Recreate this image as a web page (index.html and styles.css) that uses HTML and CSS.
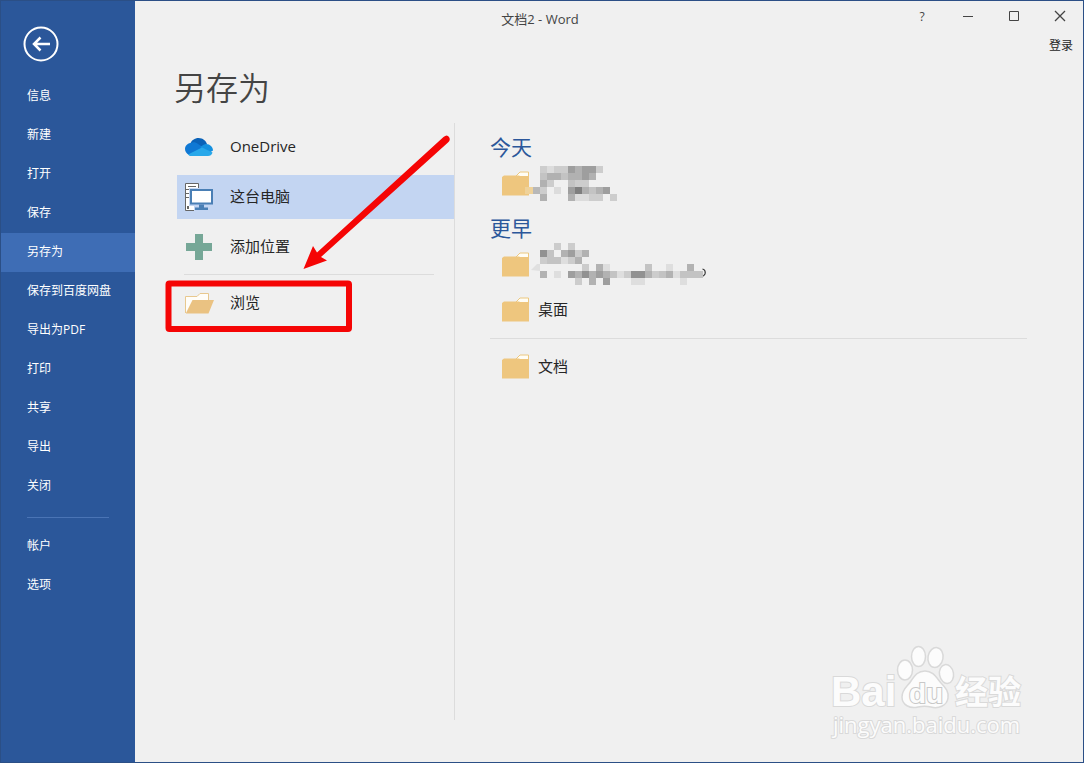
FILE: index.html
```html
<!DOCTYPE html>
<html lang="zh-CN">
<head>
    <meta charset="UTF-8">
    <meta name="viewport" content="width=device-width, initial-scale=1.0">
    <title>文档2 - Word</title>
    <link rel="stylesheet" href="styles.css">
</head>
<body>
    <svg class="defs" aria-hidden="true">
        <symbol id="folder" viewBox="0 0 28 25">
            <path d="M14 5 L18 1 H26.500 V6 H14Z" fill="#fffdf5" stroke="#ecc880" stroke-width="1"/>
            <path d="M0 6 L2 4.500 H15 L17 4.500 L18 5 H27 V24.500 H0Z" fill="#eec67e"/>
        </symbol>
    </svg>

    <div class="window">
        <aside class="sidebar">
            <button class="back" type="button" aria-label="返回">
                <svg width="36" height="36" viewBox="0 0 36 36">
                    <circle cx="18" cy="18" r="16.500" fill="none" stroke="#fff" stroke-width="2"/>
                    <path d="M27 18H11M17.500 11.500L11 18l6.500 6.500" fill="none" stroke="#fff" stroke-width="2.500"/>
                </svg>
            </button>
            <nav class="menu">
                <a href="#">信息</a>
                <a href="#">新建</a>
                <a href="#">打开</a>
                <a href="#">保存</a>
                <a href="#" class="active">另存为</a>
                <a href="#">保存到百度网盘</a>
                <a href="#">导出为PDF</a>
                <a href="#">打印</a>
                <a href="#">共享</a>
                <a href="#">导出</a>
                <a href="#">关闭</a>
                <hr>
                <a href="#">帐户</a>
                <a href="#">选项</a>
            </nav>
        </aside>

        <main class="main">
            <header class="titlebar">
                <span class="doc-title">文档2 - Word</span>
                <div class="controls">
                    <button type="button" aria-label="帮助">?</button>
                    <button type="button" aria-label="最小化">
                        <svg width="12" height="12" viewBox="0 0 12 12"><path d="M1 6.500h10" stroke="#444" fill="none"/></svg>
                    </button>
                    <button type="button" aria-label="最大化">
                        <svg width="12" height="12" viewBox="0 0 12 12"><path d="M1.500 1.500h9v9h-9z" stroke="#444" fill="none"/></svg>
                    </button>
                    <button type="button" aria-label="关闭">
                        <svg width="12" height="12" viewBox="0 0 12 12"><path d="M1 1l10 10M11 1L1 11" stroke="#444" stroke-width="1.300" fill="none"/></svg>
                    </button>
                </div>
            </header>
            <div class="account"><a href="#">登录</a></div>

            <h1>另存为</h1>

            <div class="panels">
                <section class="places">
                    <button type="button" class="place">
                        <svg width="30" height="30" viewBox="0 0 30 30">
                            <path d="M6 13 C7 8 11 6 14.500 6 C19 6 22 9 23 12 L15 17Z" fill="#0a62b8"/>
                            <path d="M5 23 C-1 20 0 12 6.500 11 C9 9.500 12 10 14 12 L22 17 L12 24 H7Z" fill="#0f78d4"/>
                            <path d="M16 15 L20 12.500 C24 10.500 29 14 29 18.500 L25 21Z" fill="#1490df"/>
                            <path d="M4 22.500 L18 15.500 L28.500 20.500 C28 23 26 24 24 24 H7 C6 24 5 23.500 4 22.500Z" fill="#28a8ea"/>
                        </svg>
                        <span>OneDrive</span>
                    </button>
                    <button type="button" class="place selected">
                        <svg width="30" height="30" viewBox="0 0 30 30">
                            <path d="M1.500 1.500H14.500V28.500H1.500Z" fill="#fff" stroke="#666"/>
                            <path d="M4 4.500h8M2 7.500h12M2 11.500h5M2 15.500h5" stroke="#666" fill="none"/>
                            <path d="M3 24h2v3H3z" fill="#666"/>
                            <path d="M5 6H30V24H22V30H10V24H5Z" fill="#c3d5f2"/>
                            <path d="M7 8H28V21.500H7Z" fill="#fff" stroke="#4a7fb5" stroke-width="2"/>
                            <path d="M15 22.500h5v3h4v2.500H11v-2.500h4z" fill="#4a7fb5"/>
                        </svg>
                        <span>这台电脑</span>
                    </button>
                    <button type="button" class="place">
                        <svg width="30" height="30" viewBox="0 0 30 30">
                            <path d="M11 2h8v9h9v8h-9v9h-8v-9H2v-8h9z" fill="#76a797"/>
                        </svg>
                        <span>添加位置</span>
                    </button>
                    <hr>
                    <button type="button" class="place">
                        <svg width="30" height="30" viewBox="0 0 30 30">
                            <path d="M1.500 25V8.500H13L16 5.500H24.500V13" fill="#fffdf8" stroke="#e8c88e"/>
                            <path d="M2 25L8.500 12H30L24.500 25.500H2Z" fill="#eac282"/>
                        </svg>
                        <span>浏览</span>
                    </button>

                    <svg class="callout" width="300" height="220" viewBox="0 0 300 220" aria-hidden="true">
                        <rect x="8.500" y="163.500" width="180.500" height="45.500" rx="1" fill="none" stroke="#f50505" stroke-width="6"/>
                        <path d="M283.500 17Q287 14 289 17Q291 20 288 22.500L161 137L167 140.500L143.500 149L153 126L157 132.500Z" fill="#f50505"/>
                    </svg>
                </section>

                <section class="recent">
                    <h2>今天</h2>
                    <a href="#" class="folder">
                        <svg class="folder-icon"><use href="#folder"/></svg>
                        <svg class="mosaic" width="182" height="42" viewBox="533 243 182 42" aria-label="文件夹">
                            <g transform="translate(0 80)" shape-rendering="crispEdges">
                                <path d="M525 187H533V194H525Z" fill="#efd29a"/>
                                <path d="M533 187h7v7h-7z" fill="#b8b8b8"/>
                                <path d="M547 166h7v7h-7zM554 187h7v7h-7zM575 194h14v7h-14z" fill="#dcdcdc"/>
                                <path d="M540 166h7v7h-7zM554 166h14v7h-14zM596 166h7v7h-7zM547 180h7v7h-7zM575 180h14v7h-14zM540 187h7v7h-7zM589 194h14v7h-14zM610 194h7v7h-7z" fill="#cdcdcd"/>
                                <path d="M540 173h7v7h-7zM561 173h7v7h-7zM568 180h7v7h-7zM589 187h7v7h-7z" fill="#c3c3c3"/>
                                <path d="M575 166h7v7h-7zM547 173h14v7h-14zM568 173h14v7h-14zM589 173h7v7h-7zM540 180h7v7h-7zM582 187h7v7h-7zM596 187h7v7h-7zM540 194h7v7h-7zM568 194h7v7h-7z" fill="#b1b1b1"/>
                                <path d="M568 166h7v7h-7zM582 166h14v7h-14zM582 173h7v7h-7zM568 187h7v7h-7zM603 187h7v7h-7z" fill="#9e9e9e"/>
                                <path d="M575 187h7v7h-7z" fill="#7f7f7f"/>
                            </g>
                        </svg>
                    </a>
                    <h2>更早</h2>
                    <a href="#" class="folder">
                        <svg class="folder-icon"><use href="#folder"/></svg>
                        <svg class="mosaic" width="182" height="42" viewBox="533 244 182 42" aria-label="文件夹">
                            <path d="M702.500 269Q706 270 705 274Q704 276 702 276.500" fill="none" stroke="#333" stroke-width="1.200"/>
                            <path d="M531 270L537 264H540V271Z" fill="#e0e0e0"/>
                            <g shape-rendering="crispEdges">
                                <path d="M561 257h7v7h-7zM603 264h7v7h-7zM666 264h7v7h-7zM554 271h7v7h-7zM617 271h7v7h-7zM673 271h7v7h-7zM631 278h14v7h-14zM680 278h7v7h-7z" fill="#dedede"/>
                                <path d="M554 243h7v7h-7zM568 243h7v7h-7zM575 250h7v7h-7zM540 257h7v7h-7zM568 257h7v7h-7zM582 264h7v7h-7zM624 271h7v7h-7zM652 271h7v7h-7zM575 278h7v7h-7z" fill="#cccccc"/>
                                <path d="M547 250h7v7h-7zM547 257h14v7h-14zM645 264h7v7h-7zM610 271h7v7h-7zM659 271h7v7h-7zM680 271h23v7h-23z" fill="#c3c3c3"/>
                                <path d="M561 250h7v7h-7zM582 250h7v7h-7zM575 257h7v7h-7zM596 264h7v7h-7zM687 264h7v7h-7zM540 271h7v7h-7zM575 271h7v7h-7zM589 271h7v7h-7zM603 271h7v7h-7zM645 271h7v7h-7zM666 271h7v7h-7zM589 278h7v7h-7z" fill="#b2b2b2"/>
                                <path d="M568 250h7v7h-7zM568 271h7v7h-7zM596 271h7v7h-7zM603 278h7v7h-7z" fill="#9e9e9e"/>
                                <path d="M540 250h7v7h-7zM582 271h7v7h-7zM631 271h14v7h-14z" fill="#919191"/>
                            </g>
                        </svg>
                    </a>
                    <a href="#" class="folder">
                        <svg class="folder-icon"><use href="#folder"/></svg>
                        <span>桌面</span>
                    </a>
                    <hr>
                    <a href="#" class="folder">
                        <svg class="folder-icon"><use href="#folder"/></svg>
                        <span>文档</span>
                    </a>
                </section>
            </div>
        </main>

        <svg class="watermark" width="204" height="100" viewBox="0 0 204 100">
            <g fill="#fcfcfc" stroke="#d9d9d9" stroke-width="1.500">
                <ellipse cx="75" cy="31" rx="7.500" ry="10"/>
                <ellipse cx="88.500" cy="17.500" rx="7" ry="10"/>
                <ellipse cx="105.500" cy="18.500" rx="7.500" ry="10" transform="rotate(10 105.500 18.500)"/>
                <ellipse cx="116.500" cy="35" rx="7" ry="9.500" transform="rotate(-10 116.500 35)"/>
                <path d="M95 32C103 32 106 38 111 44C116 49 119 53 118 59C117 67 108 70 101 68C97 67 92 67 88 68C80 70 72 66 72 58C72 50 78 47 81 42C85 36 88 32 95 32Z"/>
            </g>
            <g class="mark-text">
                <text x="1" y="67" class="bai">Bai</text>
                <text x="79" y="64" class="du">du</text>
                <text x="125" y="65" class="exp">经验</text>
                <text x="3" y="94" class="site">jingyan.baidu.com</text>
            </g>
        </svg>
    </div>
</body>
</html>
```

FILE: styles.css
```css
* {
    margin: 0;
    padding: 0;
    box-sizing: border-box;
}

body {
    font-family: "Open Sans", "Noto Sans CJK SC", sans-serif;
    font-size: 12px;
    color: #262626;
    background: #f0f0f0;
}

button {
    font: inherit;
    color: inherit;
    background: none;
    border: none;
    cursor: pointer;
}

a {
    color: inherit;
    text-decoration: none;
}

hr {
    border: none;
    border-top: 1px solid #dcdcdc;
}

svg {
    flex-shrink: 0;
}

.defs {
    display: none;
}

.window {
    position: relative;
    display: flex;
    min-height: 100vh;
    border: 1px solid #2b4f86;
    background: #f0f0f0;
}

/* left menu */
.sidebar {
    width: 134px;
    flex-shrink: 0;
    background: #2b579a;
    color: #fff;
}

.back {
    display: block;
    width: 36px;
    height: 36px;
    margin: 25px 0 15px 22px;
}

.menu a {
    display: flex;
    align-items: center;
    height: 39px;
    padding: 0 0 4px 26px;
}

.menu a:hover,
.menu .active {
    background: #3e6db5;
}

.menu hr {
    margin: 11px 26px 9px 26px;
    border-color: #4a74b5;
}

/* right side */
.main {
    flex: 1;
    display: flex;
    flex-direction: column;
}

.titlebar {
    display: flex;
    align-items: center;
    height: 32px;
}

.doc-title {
    flex: 1;
    padding: 2px 0 0 46px;
    font-size: 13px;
    text-align: center;
    color: #444;
}

.controls {
    display: flex;
}

.controls button {
    display: flex;
    align-items: center;
    justify-content: center;
    width: 46px;
    height: 32px;
    padding-bottom: 2px;
    color: #444;
}

.account {
    padding: 1px 10px 0 0;
    line-height: 24px;
    text-align: right;
}

h1 {
    padding-left: 39px;
    font-family: "Noto Sans CJK SC", sans-serif;
    font-size: 32px;
    font-weight: 350;
    line-height: 56px;
    color: #444;
}

.panels {
    flex: 1;
    display: flex;
    margin: 9px 56px 42px 42px;
}

.places {
    position: relative;
    width: 278px;
    flex-shrink: 0;
    padding-top: 2px;
    border-right: 1px solid #dcdcdc;
}

.place {
    display: flex;
    align-items: center;
    gap: 16px;
    width: 100%;
    height: 44px;
    margin-bottom: 6px;
    padding-left: 7px;
    font-size: 15px;
    text-align: left;
}

.place span,
.folder span {
    padding-bottom: 3px;
}

.place.selected {
    background: #c3d5f2;
}

.places hr {
    margin: -1px 20px 6px 7px;
}

/* red box and arrow over the list */
.callout {
    position: absolute;
    left: -17px;
    top: -3px;
    pointer-events: none;
}

.recent {
    flex: 1;
    padding: 10px 0 0 35px;
}

h2 {
    font-size: 21px;
    font-weight: 400;
    line-height: 28px;
    color: #2b579a;
}

.folder + h2 {
    margin-top: 8px;
}

.folder {
    display: flex;
    align-items: center;
    gap: 8px;
    height: 45px;
    padding-left: 12px;
    font-size: 15px;
}

.folder-icon {
    width: 28px;
    height: 25px;
}

.mosaic {
    margin-left: -5px;
    overflow: visible;
}

.recent hr {
    margin: 6px 0 5px;
}

.watermark {
    position: absolute;
    right: 49px;
    bottom: 23px;
    overflow: visible;
}

.mark-text {
    fill: #fcfcfc;
    stroke: #d9d9d9;
    stroke-width: 2px;
    paint-order: stroke;
}

.bai {
    font: 700 42px "Liberation Sans", sans-serif;
}

.du {
    font: 700 28px "Liberation Sans", sans-serif;
    stroke: #c8c8c8;
}

.exp {
    font: 700 33px "Noto Sans CJK SC", sans-serif;
}

.site {
    font: 400 22px "Open Sans", sans-serif;
}
```
